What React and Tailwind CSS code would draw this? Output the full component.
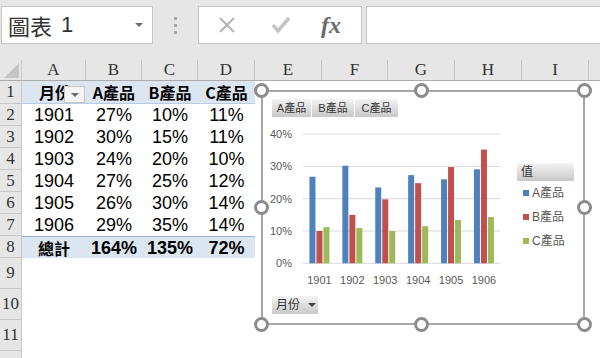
import React from 'react';

const COLS = [
  { key: 'A', cls: 'w-[64px]' },
  { key: 'B', cls: 'w-[56px]' },
  { key: 'C', cls: 'w-[56px]' },
  { key: 'D', cls: 'w-[57px]' },
  { key: 'E', cls: 'w-[67px]' },
  { key: 'F', cls: 'w-[66px]' },
  { key: 'G', cls: 'w-[67px]' },
  { key: 'H', cls: 'w-[67px]' },
  { key: 'I', cls: 'w-[67px]' },
  { key: '', cls: 'w-[67px]' }, // J 欄（字在畫面外）
];

const DATA = [
  ['1901', '27%', '10%', '11%'],
  ['1902', '30%', '15%', '11%'],
  ['1903', '24%', '20%', '10%'],
  ['1904', '27%', '25%', '12%'],
  ['1905', '26%', '30%', '14%'],
  ['1906', '29%', '35%', '14%'],
];

// 圖表數值（百分比）
const SERIES = [
  { name: 'A產品', color: '#4f81bd', vals: [26.8, 30.2, 23.5, 27.3, 26.0, 29.1] },
  { name: 'B產品', color: '#c0504d', vals: [10.0, 15.0, 19.8, 24.8, 29.8, 35.2] },
  { name: 'C產品', color: '#9bbb59', vals: [11.2, 10.9, 10.0, 11.5, 13.4, 14.3] },
];
const MONTHS = ['1901', '1902', '1903', '1904', '1905', '1906'];

const SANS = "font-['Liberation_Sans','Noto_Sans_CJK_TC',sans-serif]";
const SERIF = "font-['Liberation_Serif',serif]";

const RowHead = ({ n, h }) => (
  <div className={`w-[22px] shrink-0 ${h} bg-[#e6e6e6] border-r border-b border-[#c8c8c8] flex items-center justify-center text-[17px] text-[#333] ${SERIF}`}>
    {n}
  </div>
);

const Plot = () => {
  const y0 = 146.3;
  const step = 32.3;
  const x0 = 40;
  const catW = 32.9;
  return (
    <svg width="247" height="173" className="shrink-0">
      {[0, 1, 2, 3, 4].map((i) => (
        <g key={i}>
          <line x1={x0} x2={237.5} y1={y0 - i * step} y2={y0 - i * step} stroke="#d9d9d9" strokeWidth="1" />
          <text x="29" y={y0 - i * step + 4} textAnchor="end" fontSize="11" fill="#595959" fontFamily="Liberation Sans, sans-serif">
            {i * 10}%
          </text>
        </g>
      ))}
      {MONTHS.map((m, ci) => {
        const cx = x0 + catW * (ci + 0.5);
        return (
          <g key={m}>
            {SERIES.map((s, si) => {
              const h = (s.vals[ci] / 10) * step;
              return <rect key={s.name} x={cx - 10 + si * 7} y={y0 - h} width="6" height={h} fill={s.color} />;
            })}
            <text x={cx} y="167" textAnchor="middle" fontSize="11" fill="#595959" fontFamily="Liberation Sans, sans-serif">
              {m}
            </text>
          </g>
        );
      })}
    </svg>
  );
};

const FieldBtn = ({ children, cls }) => (
  <div className={`${cls} h-[18px] bg-gradient-to-b from-[#f4f4f4] to-[#c8c8c8] flex items-center text-[11px] text-[#333]`}>
    {children}
  </div>
);

const Handle = ({ pos }) => (
  <div className={`absolute ${pos} w-[15px] h-[15px] rounded-full border-[3px] border-[#8c8c8c] bg-white`} />
);

const Chart = () => (
  <div className={`absolute left-[261px] top-[90px] w-[324px] h-[235px] border-2 border-[#a6a6a6] bg-white ${SANS}`}>
    <div className="flex flex-col">
      <div className="flex gap-[1px] pt-[7px] pl-[9px]">
        <FieldBtn cls="w-[39px] justify-center">A產品</FieldBtn>
        <FieldBtn cls="w-[42px] justify-center">B產品</FieldBtn>
        <FieldBtn cls="w-[43px] justify-center">C產品</FieldBtn>
      </div>
      <div className="flex">
        <Plot />
        <div className="ml-[7px] mt-[46px] flex flex-col">
          <FieldBtn cls="w-[57px] pl-[4px] text-[12px]">值</FieldBtn>
          {SERIES.map((s) => (
            <div key={s.name} className="h-[24px] flex items-center pl-[6px] gap-[3px] text-[12px] text-[#595959]">
              <span className="w-[6px] h-[6px]" style={{ backgroundColor: s.color }} />
              <span>{s.name}</span>
            </div>
          ))}
        </div>
      </div>
      <div className="ml-[9px] mt-[6px] w-[46px] h-[18px] bg-gradient-to-b from-[#f4f4f4] to-[#c8c8c8] flex items-center pl-[4px] text-[12px] text-[#333]">
        <span>月份</span>
        <span className="ml-[8px] w-0 h-0 border-l-[4px] border-r-[4px] border-t-[4px] border-l-transparent border-r-transparent border-t-[#404040]" />
      </div>
    </div>
    <Handle pos="-left-[9px] -top-[9px]" />
    <Handle pos="left-[151px] -top-[9px]" />
    <Handle pos="-right-[9px] -top-[9px]" />
    <Handle pos="-left-[9px] top-[108px]" />
    <Handle pos="-right-[9px] top-[108px]" />
    <Handle pos="-left-[9px] -bottom-[9px]" />
    <Handle pos="left-[151px] -bottom-[9px]" />
    <Handle pos="-right-[9px] -bottom-[9px]" />
  </div>
);

export default function App() {
  return (
    <div className={`relative w-[600px] h-[358px] overflow-hidden bg-[#e6e6e6] ${SANS}`}>
      {/* 名稱方塊 + 公式列 */}
      <div className="h-[60px] flex items-start pt-[6px]">
        <div className="ml-[1px] w-[152px] h-[38px] shrink-0 bg-white border border-[#c6c6c6] flex items-center pl-[6px] pr-[9px]">
          <span className="text-[22px] text-[#333] leading-none font-['Noto_Sans_CJK_TC','Liberation_Sans',sans-serif]">圖表</span>
          <span className="ml-[9px] text-[22px] text-[#333] leading-none">1</span>
          <span className="ml-auto w-0 h-0 border-l-[4px] border-r-[4px] border-t-[4px] border-l-transparent border-r-transparent border-t-[#6d6d6d]" />
        </div>
        <div className="w-[45px] h-[38px] shrink-0 flex flex-col items-center justify-center gap-[4px]">
          <span className="w-[3px] h-[3px] bg-[#a8a8a8]" />
          <span className="w-[3px] h-[3px] bg-[#a8a8a8]" />
          <span className="w-[3px] h-[3px] bg-[#a8a8a8]" />
        </div>
        <div className="w-[164px] h-[38px] shrink-0 bg-white border border-[#c6c6c6] flex items-center">
          <svg width="20" height="20" viewBox="0 0 20 20" className="ml-[18px]">
            <path d="M3 3 L17 17 M17 3 L3 17" stroke="#b4b4b4" strokeWidth="2" fill="none" />
          </svg>
          <svg width="20" height="20" viewBox="0 0 20 20" className="ml-[34px]">
            <path d="M2 10 L7 16 L18 3" stroke="#c4c4c4" strokeWidth="3.5" fill="none" />
          </svg>
          <span className={`ml-[30px] text-[24px] italic font-semibold text-[#6b6b6b] leading-none ${SERIF}`}>fx</span>
        </div>
        <div className="ml-[4px] flex-1 h-[38px] bg-white border border-[#c6c6c6] -mr-[2px]" />
      </div>

      {/* 欄標題 */}
      <div className="flex h-[21px] border-b border-[#ababab]">
        <div className="w-[22px] shrink-0 border-r border-[#c8c8c8] flex items-end justify-end pr-[2px] pb-[2px]">
          <span className="w-0 h-0 border-l-[15px] border-b-[15px] border-l-transparent border-b-[#c4c4c4]" />
        </div>
        {COLS.map((c, i) => (
          <div key={i} className={`${c.cls} shrink-0 border-r border-[#c8c8c8] flex items-center justify-center text-[17px] text-[#333] ${SERIF}`}>
            {c.key}
          </div>
        ))}
      </div>

      {/* 工作表 */}
      <div className="flex flex-col">
        <div className="flex">
          <RowHead n="1" h="h-[23px]" />
          <div className="flex h-[23px] bg-[#dce6f1] border-b border-[#b8cce4] text-[16px] font-bold text-black font-['Noto_Sans_CJK_TC','Liberation_Sans',sans-serif]">
            <div className="w-[64px] relative flex items-center pl-[17px] overflow-hidden">
              <span>月份</span>
              <div className="absolute left-[42px] top-[5px] w-[21px] h-[17px] bg-[#f4f4f4] border border-[#c6c6c6] flex items-center justify-center">
                <span className="w-0 h-0 border-l-[4px] border-r-[4px] border-t-[4px] border-l-transparent border-r-transparent border-t-[#6d6d6d]" />
              </div>
            </div>
            <div className="w-[56px] flex items-center justify-center whitespace-nowrap">A產品</div>
            <div className="w-[56px] flex items-center justify-center whitespace-nowrap">B產品</div>
            <div className="w-[57px] flex items-center justify-center whitespace-nowrap">C產品</div>
          </div>
          <div className="flex-1 bg-white" />
        </div>
        {DATA.map((r, i) => (
          <div key={r[0]} className="flex">
            <RowHead n={i + 2} h="h-[22px]" />
            <div className="flex-1 flex h-[22px] bg-white text-[18px] text-black leading-none">
              <div className="w-[64px] flex items-center justify-center">{r[0]}</div>
              <div className="w-[56px] flex items-center justify-center">{r[1]}</div>
              <div className="w-[56px] flex items-center justify-center">{r[2]}</div>
              <div className="w-[57px] flex items-center justify-center">{r[3]}</div>
            </div>
          </div>
        ))}
        <div className="flex">
          <RowHead n="8" h="h-[22px]" />
          <div className="flex h-[22px] w-[233px] bg-[#dce6f1] border-t border-[#95b3d7] font-bold text-black leading-none">
            <div className="w-[64px] flex items-center justify-center text-[16px] font-['Noto_Sans_CJK_TC',sans-serif]">總計</div>
            <div className="w-[56px] flex items-center justify-center text-[18px]">164%</div>
            <div className="w-[56px] flex items-center justify-center text-[18px]">135%</div>
            <div className="w-[57px] flex items-center justify-center text-[18px]">72%</div>
          </div>
          <div className="flex-1 bg-white" />
        </div>
        {[9, 10, 11, ''].map((n, i) => (
          <div key={i} className="flex">
            <RowHead n={n} h="h-[31px]" />
            <div className="flex-1 h-[31px] bg-white" />
          </div>
        ))}
      </div>

      <Chart />
    </div>
  );
}
